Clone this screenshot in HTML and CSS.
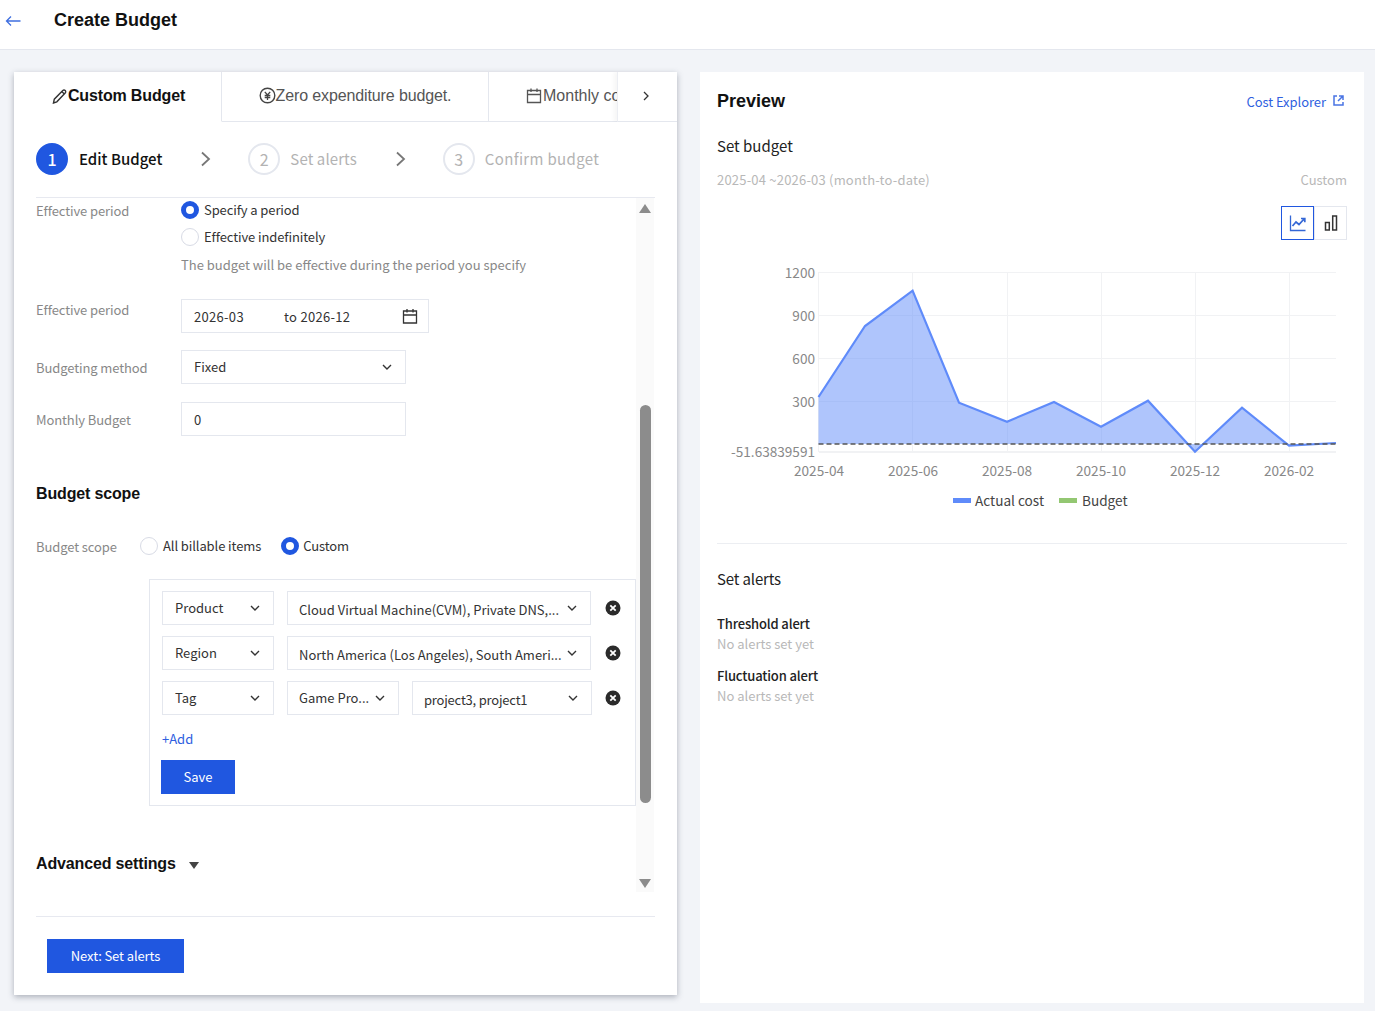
FILE: index.html
```html
<!DOCTYPE html>
<html lang="en">
<head>
<meta charset="utf-8">
<title>Create Budget</title>
<link rel="stylesheet" href="styles.css">
</head>
<body>
<svg class="defs" width="0" height="0" aria-hidden="true">
  <symbol id="chev" viewBox="0 0 12 12"><path d="M2 4l4 4 4-4" fill="none" stroke="currentColor" stroke-width="1.4"/></symbol>
  <symbol id="close" viewBox="0 0 16 16"><circle cx="8" cy="8" r="7.5" fill="#2b2b2b"/><path d="M5.3 5.3l5.4 5.4M10.7 5.3l-5.4 5.4" stroke="#fff" stroke-width="1.8"/></symbol>
  <symbol id="cal" viewBox="0 0 16 16"><path d="M1.5 3h13v12h-13zM1.5 7h13M5 1v3.500M11 1v3.500" fill="none" stroke="currentColor" stroke-width="1.300"/></symbol>
</svg>
<header class="topbar">
  <svg class="back" width="16" height="12" viewBox="0 0 16 12"><path d="M15.500 6H1.500M6 1.500L1.500 6 6 10.500" fill="none" stroke="#3f6fe0" stroke-width="1.300"/></svg>
  <h1 class="title">Create Budget</h1>
</header>
<main class="page">
  <section class="card left">
    <nav class="tabs">
      <div class="tab tab-active">
        <svg width="16" height="16" viewBox="0 0 16 16"><path d="M1.500 15l.8-3.800L10.800 2.500a1.500 1.500 0 0 1 2.400 2.400L4.800 13.800z M9.800 3.600l2.500 2.300" fill="none" stroke="#333" stroke-width="1.400"/></svg>
        <span>Custom Budget</span>
      </div>
      <div class="tab tab-zero">
        <svg width="17" height="17" viewBox="0 0 17 17"><circle cx="8.500" cy="8.500" r="7.300" fill="none" stroke="#444" stroke-width="1.400"/><path d="M5.800 4.800l2.700 3.200 2.700-3.200M8.500 8v5M5.700 8.500h5.600M5.700 10.500h5.600" fill="none" stroke="#444" stroke-width="1.300"/></svg>
        <span>Zero expenditure budget.</span>
      </div>
      <div class="tab tab-month">
        <svg class="tab-cal" width="16" height="17"><use href="#cal"/></svg>
        <span>Monthly cost budget</span>
      </div>
      <div class="tab-next">
        <svg width="10" height="10" viewBox="0 0 10 10"><path d="M3 1l4 4-4 4" fill="none" stroke="#333" stroke-width="1.300"/></svg>
      </div>
    </nav>
    <ol class="steps">
      <li class="step step-current"><span class="step-num">1</span><span>Edit Budget</span></li>
      <li class="step-arrow"><svg width="12" height="16" viewBox="0 0 12 16"><path d="M2 1.500L9 8l-7 6.500" fill="none" stroke="#777" stroke-width="1.800"/></svg></li>
      <li class="step step-mid"><span class="step-num">2</span><span>Set alerts</span></li>
      <li class="step-arrow"><svg width="12" height="16" viewBox="0 0 12 16"><path d="M2 1.500L9 8l-7 6.500" fill="none" stroke="#777" stroke-width="1.800"/></svg></li>
      <li class="step step-last"><span class="step-num">3</span><span>Confirm budget</span></li>
    </ol>
    <div class="scroller">
      <div class="form">
        <div class="row row-period">
          <div class="label">Effective period</div>
          <div class="options">
            <label class="radio"><span class="dot dot-on"></span>Specify a period</label>
            <label class="radio"><span class="dot"></span>Effective indefinitely</label>
            <p class="hint">The budget will be effective during the period you specify</p>
          </div>
        </div>
        <div class="row row-date">
          <div class="label">Effective period</div>
          <div class="box box-date">
            <span class="date-from">2026-03</span><span>to 2026-12</span>
            <svg class="date-icon" width="16" height="16"><use href="#cal"/></svg>
          </div>
        </div>
        <div class="row row-method">
          <div class="label">Budgeting method</div>
          <div class="box box-wide"><span>Fixed</span><svg class="chev" width="12" height="12"><use href="#chev"/></svg></div>
        </div>
        <div class="row row-budget">
          <div class="label">Monthly Budget</div>
          <div class="box box-wide"><span>0</span></div>
        </div>
        <h2 class="section">Budget scope</h2>
        <div class="row row-scope">
          <div class="label label-scope">Budget scope</div>
          <label class="radio radio-inline"><span class="dot"></span>All billable items</label>
          <label class="radio radio-inline radio-custom"><span class="dot dot-on"></span>Custom</label>
        </div>
        <div class="scope-box">
          <div class="filter">
            <div class="box sel-type"><span>Product</span><svg class="chev" width="12" height="12"><use href="#chev"/></svg></div>
            <div class="box sel-value low"><span class="clip">Cloud Virtual Machine(CVM), Private DNS,...</span><svg class="chev" width="12" height="12"><use href="#chev"/></svg></div>
            <svg class="remove" width="16" height="16"><use href="#close"/></svg>
          </div>
          <div class="filter">
            <div class="box sel-type"><span>Region</span><svg class="chev" width="12" height="12"><use href="#chev"/></svg></div>
            <div class="box sel-value low"><span class="clip">North America (Los Angeles), South Ameri...</span><svg class="chev" width="12" height="12"><use href="#chev"/></svg></div>
            <svg class="remove" width="16" height="16"><use href="#close"/></svg>
          </div>
          <div class="filter">
            <div class="box sel-type"><span>Tag</span><svg class="chev" width="12" height="12"><use href="#chev"/></svg></div>
            <div class="box sel-key"><span>Game Pro...</span><svg class="chev" width="12" height="12"><use href="#chev"/></svg></div>
            <div class="box sel-tag low"><span>project3, project1</span><svg class="chev" width="12" height="12"><use href="#chev"/></svg></div>
            <svg class="remove" width="16" height="16"><use href="#close"/></svg>
          </div>
          <a class="add">+Add</a>
          <button class="btn btn-save">Save</button>
        </div>
        <div class="advanced"><h2 class="section-inline">Advanced settings</h2><span class="caret"></span></div>
      </div>
      <div class="scrollbar">
        <span class="sb-up"></span>
        <span class="sb-thumb"></span>
        <span class="sb-down"></span>
      </div>
    </div>
    <footer class="foot"><button class="btn btn-next">Next: Set alerts</button></footer>
  </section>

  <section class="card right">
    <div class="preview-head">
      <h2 class="preview-title">Preview</h2>
      <a class="explorer">Cost Explorer
        <svg width="11" height="11" viewBox="0 0 11 11"><path d="M4 1H1v9h9V7M6 1h4v4M10 1L5 6" fill="none" stroke="#4a74e4" stroke-width="1.500"/></svg>
      </a>
    </div>
    <h3 class="sub">Set budget</h3>
    <div class="meta"><span class="meta-range">2025-04 ~2026-03 (month-to-date)</span><span>Custom</span></div>
    <div class="chart-switch">
      <span class="sw sw-on"><svg width="18" height="18" viewBox="0 0 18 18"><path d="M1.500 1.500v15h15" fill="none" stroke="#3467d6" stroke-width="1.300"/><path d="M3.500 12l3.500-4 3 2.500 5-5.500M12 4.500h3.800v3.800" fill="none" stroke="#3467d6" stroke-width="1.700"/></svg></span>
      <span class="sw"><svg width="14" height="16" viewBox="0 0 14 16"><path d="M1.500 7.500h3.800v7.500H1.500zM8.700 1h3.800v14H8.700z" fill="none" stroke="#333" stroke-width="1.500"/></svg></span>
    </div>
    <svg class="chart" width="630" height="260" viewBox="717 255 630 260">
      <g class="grid">
        <path d="M819 272.500H1336M819 315.500H1336M819 358.500H1336M819 401.500H1336"/>
        <path class="grid-base" d="M819 452H1336"/>
        <path d="M818.500 272V452M912.500 272V452M1007.500 272V452M1101.500 272V452M1195.500 272V452M1289.500 272V452"/>
      </g>
      <path class="area" d="M818.500 397L865 326 912.600 290.700 959 402.700 1007 421.700 1054 402 1101 426.700 1148 400.700 1195 451.700 1242 407.700 1289 445.700 1336 443V444H818.500Z"/>
      <path class="line" d="M818.500 397L865 326 912.600 290.700 959 402.700 1007 421.700 1054 402 1101 426.700 1148 400.700 1195 451.700 1242 407.700 1289 445.700 1336 443"/>
      <path class="dash" d="M818.500 444H1336"/>
      <g class="ylab">
        <text x="815" y="278">1200</text>
        <text x="815" y="321">900</text>
        <text x="815" y="364">600</text>
        <text x="815" y="407">300</text>
        <text x="815" y="457">-51.63839591</text>
      </g>
      <g class="xlab">
        <text x="819" y="476">2025-04</text>
        <text x="913" y="476">2025-06</text>
        <text x="1007" y="476">2025-08</text>
        <text x="1101" y="476">2025-10</text>
        <text x="1195" y="476">2025-12</text>
        <text x="1289" y="476">2026-02</text>
      </g>
      <rect x="953" y="498" width="18" height="5" fill="#5f8bfa"/>
      <text class="leg" x="975" y="506">Actual cost</text>
      <rect x="1059" y="498" width="18" height="5" fill="#93c772"/>
      <text class="leg" x="1082" y="506">Budget</text>
    </svg>
    <hr class="divider">
    <h3 class="sub sub-alerts">Set alerts</h3>
    <div class="alert"><strong>Threshold alert</strong><span>No alerts set yet</span></div>
    <div class="alert"><strong>Fluctuation alert</strong><span>No alerts set yet</span></div>
  </section>
</main>
</body>
</html>
```
FILE: styles.css
```css
* { box-sizing: border-box; }
html, body { margin: 0; padding: 0; }
body {
  width: 1375px;
  height: 1011px;
  overflow: hidden;
  background: #f2f4f8;
  font-family: "Noto Sans CJK SC", "Noto Sans", sans-serif;
  font-size: 13px;
  color: #222;
}
.defs { position: absolute; }
.topbar {
  height: 50px;
  background: #fff;
  border-bottom: 1px solid #e4e7ee;
  display: flex;
  align-items: flex-start;
  padding: 15px 0 0 5px;
}
.title {
  margin: -7px 0 0 33px;
  font: bold 18px/24px "Liberation Sans", Arial, sans-serif;
  color: #111;
}
.page {
  display: flex;
  align-items: flex-start;
  padding: 22px 0 0 14px;
  gap: 23px;
}
.card { background: #fff; }
.left {
  width: 663px;
  height: 923px;
  box-shadow: 0 2px 6px rgba(40, 50, 70, .35);
  display: flex;
  flex-direction: column;
}
.right {
  width: 664px;
  height: 931px;
  padding: 0 17px;
}

/* tabs */
.tabs {
  display: flex;
  height: 50px;
  overflow: hidden;
  font: 16px/20px "Liberation Sans", Arial, sans-serif;
  color: #555;
}
.tab {
  display: flex;
  align-items: center;
  justify-content: center;
  flex: none;
  padding-bottom: 2px;
  border-bottom: 1px solid #e4e7ee;
  border-right: 1px solid #e4e7ee;
  white-space: nowrap;
}
.tab svg { flex: none; }
.tab-active {
  width: 208px;
  padding-left: 2px;
  font-weight: bold;
  letter-spacing: -.15px;
  color: #111;
  border-bottom-color: transparent;
}
.tab-zero { width: 267px; letter-spacing: -.12px; }
.tab-month {
  width: 128px;
  overflow: hidden;
  justify-content: flex-start;
  padding-left: 37px;
  border-right: 0;
}
.tab-cal { margin-right: 1px; }
.tab-next {
  width: 60px;
  flex: none;
  display: flex;
  align-items: center;
  justify-content: center;
  padding: 0 4px 2px 0;
  border-left: 1px solid #eceef3;
  border-bottom: 1px solid #e4e7ee;
  box-shadow: -3px 0 4px rgba(0, 0, 0, .04);
}

/* steps */
.steps {
  list-style: none;
  margin: 0 22px;
  padding: 0 0 2px;
  height: 76px;
  border-bottom: 1px solid #e7e9f0;
  display: flex;
  align-items: center;
  font-size: 15px;
  color: #b3b3b3;
}
.step { display: flex; align-items: center; gap: 10px; }
.step-num {
  width: 32px;
  height: 32px;
  border-radius: 50%;
  border: 2px solid #e4e7ee;
  display: flex;
  align-items: center;
  justify-content: center;
  font-size: 16px;
}
.step-current { color: #111; font-weight: 500; gap: 11px; }
.step-current .step-num { background: #2057e0; border-color: #2057e0; color: #fff; }
.step-mid { letter-spacing: .1px; }
.step-last { letter-spacing: .35px; }
.step-arrow { display: flex; margin: 0 36px 0 38px; }

/* form */
.scroller {
  position: relative;
  height: 694px;
  margin: 0 22px;
  overflow: hidden;
}
.form { padding-top: 3px; }
.row { display: flex; }
.label { width: 145px; flex: none; color: #888; letter-spacing: -.1px; }
.row-period { height: 98px; }
.row-period .label { line-height: 18px; margin-top: 1px; }
.options { display: flex; flex-direction: column; }
.radio {
  display: flex;
  align-items: center;
  gap: 5px;
  height: 18px;
  line-height: 18px;
  color: #333;
  margin-bottom: 9px;
  letter-spacing: -.1px;
}
.dot {
  width: 18px;
  height: 18px;
  flex: none;
  border-radius: 50%;
  border: 1px solid #d8dbe5;
  background: #fff;
}
.dot-on { border: 5px solid #2057e0; }
.hint { margin: 1px 0 0; color: #888; line-height: 18px; }
.box {
  height: 34px;
  border: 1px solid #e4e7ee;
  display: flex;
  align-items: center;
  justify-content: space-between;
  padding: 0 12px;
  color: #333;
  white-space: nowrap;
  flex: none;
}
.row-date { margin-bottom: 17px; }
.row-date .label { line-height: 22px; }
.box-date { width: 248px; justify-content: flex-start; padding-right: 10px; letter-spacing: .3px; }
.date-from { width: 90px; }
.date-icon { margin-left: auto; color: #333; }
.row-method .label, .row-budget .label { height: 34px; line-height: 36px; }
.row-method .box span { margin-bottom: 2px; }
.row-method { margin-bottom: 18px; }
.box-wide { width: 225px; }
.chev { color: #333; flex: none; }
.section {
  margin: 46px 0 0;
  font: bold 16px/24px "Liberation Sans", Arial, sans-serif;
  letter-spacing: -.15px;
  color: #111;
}
.row-scope { margin-top: 31px; align-items: center; height: 18px; }
.label-scope { width: 104px; }
.radio-inline { margin: 0 20px 0 0; }
.radio-custom { gap: 4px; }
.scope-box {
  margin: 24px 0 0 113px;
  width: 487px;
  height: 227px;
  border: 1px solid #e4e7ee;
  padding: 11px 12px;
  display: flex;
  flex-direction: column;
}
.filter { display: flex; align-items: center; gap: 13px; margin-bottom: 11px; }
.filter .box { padding-left: 11px; }
.filter .sel-type { padding-left: 12px; }
.filter .box span { margin-bottom: 2px; }
.sel-type { width: 112px; }
.sel-value { width: 304px; }
.sel-key { width: 112px; }
.sel-tag { width: 180px; letter-spacing: -.2px; }
.filter .low span { margin-bottom: 0; padding-top: 2px; }
.clip { overflow: hidden; text-overflow: ellipsis; }
.remove { margin-left: 1px; flex: none; }
.sel-tag + .remove { margin-left: 0; }
.add { color: #2f5fe0; line-height: 18px; margin-top: 4px; }
.btn {
  border: 0;
  background: #2057e0;
  color: #fff;
  font: inherit;
  height: 34px;
  padding: 0 0 2px;
}
.btn-save { width: 74px; margin: 12px 0 0 -1px; }
.advanced { display: flex; align-items: center; gap: 13px; margin-top: 46px; }
.section-inline {
  margin: 0;
  font: bold 16px/24px "Liberation Sans", Arial, sans-serif;
  letter-spacing: -.15px;
  color: #111;
}
.caret {
  width: 0;
  height: 0;
  margin-top: 2px;
  border: 5px solid transparent;
  border-top: 7px solid #444;
  border-bottom: 0;
}
.scrollbar {
  position: absolute;
  right: 1px;
  top: 0;
  bottom: 0;
  width: 18px;
  background: #fafafa;
}
.sb-up, .sb-down, .sb-thumb { position: absolute; display: block; }
.sb-up {
  left: 3px;
  top: 6px;
  border: 6.500px solid transparent;
  border-top: 0;
  border-bottom: 9px solid #8c8c8c;
}
.sb-down {
  left: 3px;
  bottom: 4px;
  border: 6.500px solid transparent;
  border-bottom: 0;
  border-top: 9px solid #8c8c8c;
}
.sb-thumb {
  left: 4px;
  top: 207px;
  width: 11px;
  height: 398px;
  border-radius: 6px;
  background: #8c8c8c;
}
.foot {
  margin: 24px 22px 0;
  border-top: 1px solid #e7e9f0;
  padding: 22px 0 0 11px;
}
.btn-next { width: 137px; letter-spacing: -.1px; }

/* preview */
.preview-head {
  display: flex;
  justify-content: space-between;
  align-items: center;
  padding-top: 17px;
}
.preview-title { margin: 0; font: bold 18px/24px "Liberation Sans", Arial, sans-serif; color: #111; }
.explorer { color: #2f5fe0; display: flex; align-items: center; gap: 7px; margin-right: 3px; letter-spacing: -.05px; }
.explorer svg { margin-top: -2px; }
.sub { margin: 0; font-size: 15px; font-weight: 400; line-height: 22px; color: #222; }
.right > .sub { margin-top: 22px; }
.meta { display: flex; justify-content: space-between; margin-top: 13px; line-height: 20px; color: #b8b8b8; }
.meta-range { letter-spacing: .2px; }
.chart-switch { display: flex; justify-content: flex-end; margin-top: 16px; }
.sw {
  width: 33px;
  height: 34px;
  border: 1px solid #e4e7ee;
  display: flex;
  align-items: center;
  justify-content: center;
}
.sw-on { border-color: #2057e0; }
.chart { display: block; margin-top: 15px; }
.grid path { stroke: #f1f2f4; fill: none; stroke-width: 1; }
.grid .grid-base { stroke-width: 2; }
.area { fill: #5f8bfa; fill-opacity: .5; }
.line { fill: none; stroke: #5f8bfa; stroke-width: 2.200; }
.dash { stroke: #555; stroke-width: 1.500; stroke-dasharray: 5 3; fill: none; }
.chart text { font-family: "Noto Sans CJK SC", "Noto Sans", sans-serif; font-size: 13.600px; fill: #888; }
.ylab text { text-anchor: end; }
.xlab text { text-anchor: middle; }
.chart .leg { fill: #444; }
.divider { border: 0; border-top: 1px solid #eceef2; margin: 28px 0 0; }
.right > .sub-alerts { margin-top: 24px; letter-spacing: -.15px; }
.alert { display: flex; flex-direction: column; line-height: 20px; margin-top: 12px; letter-spacing: -.15px; }
.sub-alerts + .alert { margin-top: 24px; }
.alert strong { font-weight: 500; font-size: 13px; color: #222; }
.alert span { color: #b8b8b8; letter-spacing: 0; }
```
